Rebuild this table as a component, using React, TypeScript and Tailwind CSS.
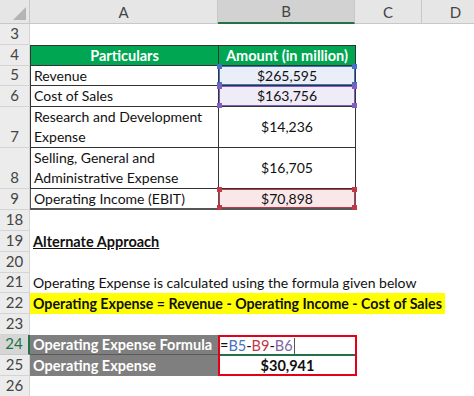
import React from 'react';

const ROW_NUM = 'w-[30px] shrink-0 flex items-end justify-center pb-[1px] bg-[#ececec] text-[#444] text-[15px] border-r border-b border-[#d4d4d4]';

type RowProps = {
    num: string;
    h: string;
    active?: boolean;
    children?: React.ReactNode;
};

const Row: React.FC<RowProps> = ({ num, h, active, children }) => (
    <div className={`flex ${h}`}>
        <div
            className={
                active
                    ? 'w-[30px] shrink-0 flex items-end justify-center pb-[1px] bg-[#d6d6d6] text-[#217346] text-[15px] border-r-2 border-r-[#217346] border-b border-[#c8c8c8]'
                    : ROW_NUM
            }
        >
            {num}
        </div>
        <div className="flex flex-1 min-w-0">{children}</div>
    </div>
);

// coloured reference box drawn over a cell, with corner handles
const RefBox: React.FC<{ color: string; bg: string }> = ({ color, bg }) => (
    <div className="absolute inset-0 pointer-events-none">
        <div className="absolute inset-0" style={{ border: `1.5px solid ${color}`, background: bg }} />
        <div className="absolute -left-[2px] -top-[2px] w-[5px] h-[5px]" style={{ background: color }} />
        <div className="absolute -right-[2px] -top-[2px] w-[5px] h-[5px]" style={{ background: color }} />
        <div className="absolute -left-[2px] -bottom-[2px] w-[5px] h-[5px]" style={{ background: color }} />
        <div className="absolute -right-[2px] -bottom-[2px] w-[5px] h-[5px]" style={{ background: color }} />
    </div>
);

const App: React.FC = () => {
    return (
        <div className="w-[474px] h-[396px] overflow-hidden bg-white text-[14px] leading-[20px] text-[#111] font-['Lato',sans-serif]">
            {/* Column headers */}
            <div className="flex h-[24px] bg-[#e6e6e6] text-[#444] text-[15px]">
                <div className="w-[30px] shrink-0 relative border-r border-b border-[#c8c8c8]">
                    <div className="absolute right-[3px] bottom-[3px] w-0 h-0 border-l-[13px] border-l-transparent border-b-[13px] border-b-[#b4b4b4]" />
                </div>
                <div className="w-[188px] shrink-0 flex items-center justify-center border-r border-b border-[#c8c8c8]">A</div>
                <div className="w-[137px] shrink-0 flex items-center justify-center bg-[#d2d2d2] border-r border-[#c8c8c8] border-b-2 border-b-[#217346]">B</div>
                <div className="w-[67px] shrink-0 flex items-center justify-center border-r border-b border-[#c8c8c8]">C</div>
                <div className="w-[67px] shrink-0 flex items-center justify-center border-b border-[#c8c8c8]">D</div>
            </div>

            <Row num="3" h="h-[21px]" />

            {/* Table */}
            <Row num="4" h="h-[21px]">
                <div className="w-[188px] shrink-0 bg-[#00a651] text-white text-[14.5px] font-bold flex items-center justify-center border border-[#333] border-r-0">
                    Particulars
                </div>
                <div className="w-[138px] shrink-0 bg-[#00a651] text-white text-[14.5px] font-bold flex items-center justify-center border border-[#333]">
                    Amount (in million)
                </div>
            </Row>
            <Row num="5" h="h-[20px]">
                <div className="w-[188px] shrink-0 flex items-center pl-[3px] border-l border-b border-[#333]">Revenue</div>
                <div className="w-[138px] shrink-0 relative flex items-center justify-center border-x border-b border-[#333]">
                    <RefBox color="#4472c4" bg="#e9eef9" />
                    <span className="relative">$265,595</span>
                </div>
            </Row>
            <Row num="6" h="h-[21px]">
                <div className="w-[188px] shrink-0 flex items-center pl-[3px] border-l border-b border-[#333]">Cost of Sales</div>
                <div className="w-[138px] shrink-0 relative flex items-center justify-center border-x border-b border-[#333]">
                    <RefBox color="#7f5fbf" bg="#efebf7" />
                    <span className="relative">$163,756</span>
                </div>
            </Row>
            <Row num="7" h="h-[41px]">
                <div className="w-[188px] shrink-0 flex items-center pl-[3px] border-l border-b border-[#333] leading-[20.5px]">
                    Research and Development Expense
                </div>
                <div className="w-[138px] shrink-0 flex items-center justify-center border-x border-b border-[#333]">$14,236</div>
            </Row>
            <Row num="8" h="h-[41px]">
                <div className="w-[188px] shrink-0 flex items-center pl-[3px] border-l border-b border-[#333] leading-[20.5px]">
                    Selling, General and Administrative Expense
                </div>
                <div className="w-[138px] shrink-0 flex items-center justify-center border-x border-b border-[#333]">$16,705</div>
            </Row>
            <Row num="9" h="h-[21px]">
                <div className="w-[188px] shrink-0 flex items-center pl-[3px] border-l border-b-2 border-[#555]">Operating Income (EBIT)</div>
                <div className="w-[138px] shrink-0 relative flex items-center justify-center border-x border-b-2 border-[#555]">
                    <RefBox color="#c0394b" bg="#f9e7e9" />
                    <span className="relative">$70,898</span>
                </div>
            </Row>

            <Row num="18" h="h-[21px]" />
            <Row num="19" h="h-[21px]">
                <div className="pl-[3px] flex items-end text-[14.5px] font-bold underline whitespace-nowrap">Alternate Approach</div>
            </Row>
            <Row num="20" h="h-[21px]" />
            <Row num="21" h="h-[20px]">
                <div className="pl-[3px] flex items-end whitespace-nowrap">Operating Expense is calculated using the formula given below</div>
            </Row>
            <Row num="22" h="h-[21px]">
                <div className="w-[415px] shrink-0 pl-[3px] flex items-center bg-[#ffff00] text-[14.2px] font-bold whitespace-nowrap">
                    Operating Expense = Revenue - Operating Income - Cost of Sales
                </div>
            </Row>
            <Row num="23" h="h-[21px]" />

            {/* Formula block */}
            <div className="flex">
                <div className="flex flex-col">
                    <Row num="24" h="h-[20px]" active>
                        <div className="w-[188px] shrink-0 pl-[3px] flex items-center bg-[#7f7f7f] text-white text-[14.5px] font-bold border-b border-[#5a5a5a] whitespace-nowrap">
                            Operating Expense Formula
                        </div>
                    </Row>
                    <Row num="25" h="h-[21px]">
                        <div className="w-[188px] shrink-0 pl-[3px] flex items-center bg-[#7f7f7f] text-white text-[14.5px] font-bold whitespace-nowrap">
                            Operating Expense
                        </div>
                    </Row>
                </div>
                <div className="w-[139px] shrink-0 h-[41px] border-2 border-[#e3001b] flex flex-col">
                    <div className="h-[19px] flex items-center border-b-2 border-[#217346] text-[14.5px]">
                        <span>=</span>
                        <span className="text-[#4472c4]">B5</span>
                        <span>-</span>
                        <span className="text-[#c0394b]">B9</span>
                        <span>-</span>
                        <span className="text-[#8064a2]">B6</span>
                        <span className="ml-[1px] w-px h-[16px] bg-[#555]" />
                    </div>
                    <div className="flex-1 flex items-center justify-center text-[14.5px] font-bold">$30,941</div>
                </div>
            </div>
            <Row num="26" h="h-[21px]" />
        </div>
    );
};

export default App;
